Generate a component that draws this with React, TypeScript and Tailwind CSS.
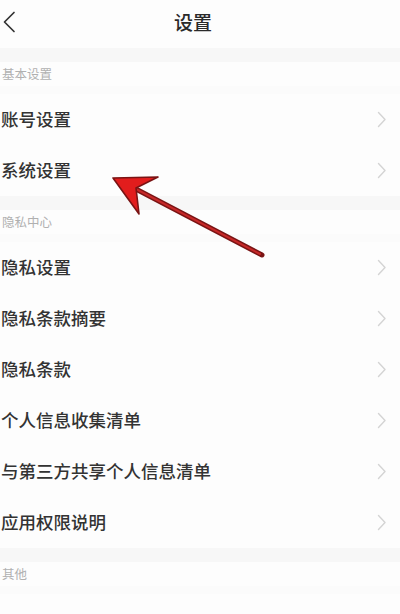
const groups = [
	{ title: '基本设置', items: ['账号设置', '系统设置'] },
	{
		title: '隐私中心',
		items: ['隐私设置', '隐私条款摘要', '隐私条款', '个人信息收集清单', '与第三方共享个人信息清单', '应用权限说明'],
	},
	{ title: '其他', items: [] as string[] },
];

function Arrow() {
	return (
		<svg width="10" height="17" viewBox="0 0 10 17" className="shrink-0">
			<path d="M1.5 1.5 L8 8.5 L1.5 15.5" fill="none" stroke="#d4d4d4" strokeWidth="1.4" strokeLinecap="round" strokeLinejoin="round" />
		</svg>
	);
}

export default function App() {
	return (
		<div
			className="relative w-[400px] h-[614px] overflow-hidden bg-[#fdfdfd] text-[#2e2e2e]"
			style={{ fontFamily: '"Noto Sans CJK SC", "Noto Sans", sans-serif' }}
		>
			{/* header */}
			<div className="h-[48px] flex items-center relative">
				<svg width="16" height="22" viewBox="0 0 16 22" className="ml-[2px] -mt-[4px]">
					<path d="M12 1.5 L2.5 11 L12 20.5" fill="none" stroke="#333" strokeWidth="1.7" strokeLinecap="round" strokeLinejoin="round" />
				</svg>
				<h1 className="absolute left-0 right-[14px] text-center text-[19px] font-medium text-[#2a2a2a] leading-none top-[12px]">设置</h1>
			</div>

			{groups.map((g) => (
				<div key={g.title}>
					<div className="h-[46px] flex flex-col">
						<div className="h-[14px] bg-[#f7f7f7]" />
						<div className="flex-1 flex items-center pl-[2px] text-[12.5px] text-[#b0b0b0]">{g.title}</div>
						<div className="h-[8px] bg-[#fbfbfb]" />
					</div>
					{g.items.map((it) => (
						<div key={it} className="h-[51px] flex items-center justify-between pl-[1px] pr-[13px]">
							<span className="text-[17.5px] font-medium text-[#333]">{it}</span>
							<Arrow />
						</div>
					))}
				</div>
			))}

			{/* red annotation arrow over the list */}
			<svg className="absolute left-0 top-0 pointer-events-none" width="400" height="614" viewBox="0 0 400 614">
				<line x1="262" y1="255" x2="132" y2="187" stroke="#7a1414" strokeWidth="5" strokeLinecap="round" />
				<line x1="260" y1="254" x2="134" y2="188" stroke="#c62828" strokeWidth="2" strokeLinecap="round" />
				<polygon points="113,178 158,177 136,188 139,214" fill="#e21d1d" stroke="#7a1414" strokeWidth="1.6" strokeLinejoin="round" />
			</svg>
		</div>
	);
}
